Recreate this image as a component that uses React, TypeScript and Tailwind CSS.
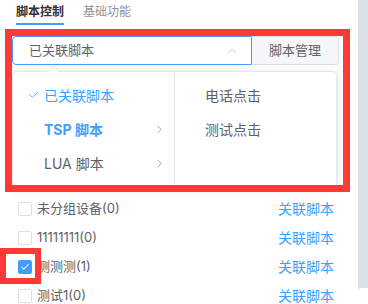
import { Check, ChevronRight, ChevronUp } from 'lucide-react';

const rows = [
  { name: '未分组设备(0)', checked: false },
  { name: '11111111(0)', checked: false },
  { name: '测测测(1)', checked: true },
  { name: '测试1(0)', checked: false },
];

function Box({ checked }: { checked: boolean }) {
  if (checked) {
    return (
      <span className="w-[14px] h-[14px] rounded-[2px] bg-[#409eff] border border-[#409eff] flex items-center justify-center">
        <Check size={10} strokeWidth={2.5} className="text-white" />
      </span>
    );
  }
  return <span className="w-[14px] h-[14px] rounded-[2px] bg-white border border-[#dcdfe6]" />;
}

export default function App() {
  return (
    <div
      className="relative w-[368px] h-[304px] overflow-hidden bg-white flex text-[#606266]"
      style={{ fontFamily: 'Inter, "Noto Sans CJK SC", sans-serif' }}
    >
      <div className="w-[358px] relative">
        {/* tabs */}
        <div className="h-[25px] flex items-end gap-[19px] pl-4 text-[12px]">
          <div className="flex flex-col items-start">
            <span className="font-bold text-[#303133] leading-[20px]">脚本控制</span>
            <span className="mt-[1px] h-[2px] w-[48px] bg-[#409eff]" />
          </div>
          <span className="text-[#909399] leading-[20px] mb-[3px]">基础功能</span>
        </div>

        {/* select + button */}
        <div className="mt-[11px] ml-[12px] flex h-[29px] w-[327px]">
          <div className="flex-1 flex items-center justify-between border border-[#409eff] rounded-l-[4px] pl-[16px] pr-[12px] text-[13px]">
            <span>已关联脚本</span>
            <ChevronUp size={14} strokeWidth={1.5} className="text-[#c0c4cc]" />
          </div>
          <div className="w-[87px] flex items-center justify-center bg-[#f5f7fa] border border-l-0 border-[#dcdfe6] rounded-r-[4px] text-[13px]">
            脚本管理
          </div>
        </div>

        {/* list */}
        <div className="pt-[129px] pl-[18px] pr-[24px]">
          {rows.map((r) => (
            <div key={r.name} className="h-[29px] flex items-center text-[13px]">
              <Box checked={r.checked} />
              <span className="ml-[5px]">{r.name}</span>
              <span className="ml-auto text-[#409eff] text-[14px]">关联脚本</span>
            </div>
          ))}
        </div>

        {/* dropdown */}
        <div className="absolute left-[12px] top-[71px] w-[325px] h-[116px] bg-white border border-[#e4e7ed] rounded-[4px] shadow-[0_2px_12px_rgba(0,0,0,0.1)] flex text-[14px]">
          <span className="absolute left-[36px] -top-[5px] w-[9px] h-[9px] bg-white border-l border-t border-[#e4e7ed] rotate-45" />
          <div className="w-[162px] border-r border-[#e4e7ed] py-[6px]">
            <div className="h-[34px] flex items-center pl-[15px] text-[#409eff]">
              <Check size={12} strokeWidth={1.5} className="mr-[4px]" />
              <span>已关联脚本</span>
            </div>
            <div className="h-[34px] flex items-center pl-[31px] pr-[8px] text-[#409eff] font-bold">
              <span>TSP 脚本</span>
              <ChevronRight size={13} strokeWidth={1.5} className="ml-auto text-[#909399]" />
            </div>
            <div className="h-[34px] flex items-center pl-[31px] pr-[8px]">
              <span>LUA 脚本</span>
              <ChevronRight size={13} strokeWidth={1.5} className="ml-auto text-[#909399]" />
            </div>
          </div>
          <div className="flex-1 py-[6px]">
            <div className="h-[34px] flex items-center pl-[30px]">电话点击</div>
            <div className="h-[34px] flex items-center pl-[30px]">测试点击</div>
          </div>
        </div>

        {/* annotation boxes */}
        <div className="absolute left-[5px] top-[29px] w-[345px] h-[163px] border-[7px] border-[#ff3838]" />
        <div className="absolute left-0 top-[248px] w-[41px] h-[36px] border-[6px] border-[#ff3838]" />
      </div>
      <div className="w-[10px] bg-[#dcdfe6] relative">
        <span className="absolute left-0 top-[288px] w-[10px] h-[20px] bg-white rounded-tl-[3px]" />
      </div>
    </div>
  );
}
